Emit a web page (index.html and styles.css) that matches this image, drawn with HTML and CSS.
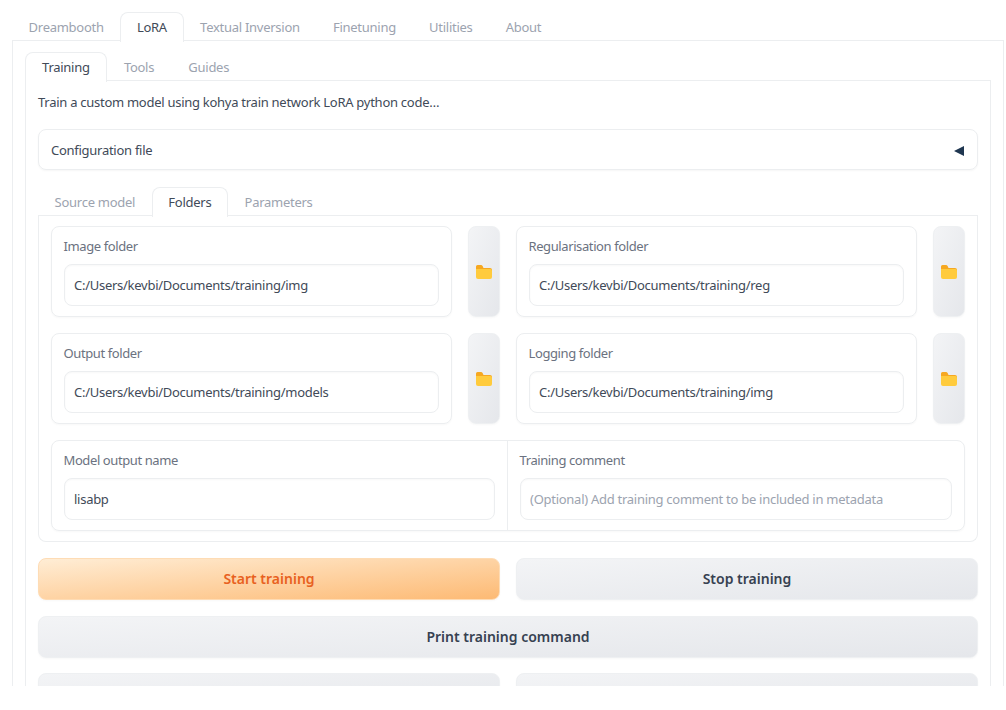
FILE: index.html
```html
<!DOCTYPE html>
<html>

<head>
    <title>Kohya LoRA Training</title>
    <link rel="stylesheet" href="styles.css">
</head>

<body>
    <div class="page">
        <nav class="tabs top-tabs">
            <a class="tab">Dreambooth</a>
            <a class="tab active">LoRA</a>
            <a class="tab">Textual Inversion</a>
            <a class="tab">Finetuning</a>
            <a class="tab">Utilities</a>
            <a class="tab">About</a>
        </nav>
        <div class="outer-panel">
            <nav class="tabs mode-tabs">
                <a class="tab active">Training</a>
                <a class="tab">Tools</a>
                <a class="tab">Guides</a>
            </nav>
            <div class="inner-panel">
                <p class="intro">Train a custom model using kohya train network LoRA python code…</p>

                <div class="accordion">
                    <span>Configuration file</span>
                    <span class="arrow"></span>
                </div>

                <nav class="tabs sub-tabs">
                    <a class="tab">Source model</a>
                    <a class="tab active">Folders</a>
                    <a class="tab">Parameters</a>
                </nav>
                <div class="folders-panel">
                    <div class="folder-row">
                        <label class="field">
                            <span class="field-label">Image folder</span>
                            <input class="text-input" value="C:/Users/kevbi/Documents/training/img">
                        </label>
                        <button class="btn folder-btn">
                            <svg viewBox="0 0 16 14" width="16" height="14"><path fill="#f6a821" d="M0 1.5Q0 0 1.5 0H5Q6 0 6.600 1L7.500 3H14Q16 3 16 5V8H0Z"/><path fill="#ffcb3d" d="M0 4H14.500Q16 4 16 5.500V12Q16 14 14 14H2Q0 14 0 12Z"/></svg>
                        </button>
                        <label class="field">
                            <span class="field-label">Regularisation folder</span>
                            <input class="text-input" value="C:/Users/kevbi/Documents/training/reg">
                        </label>
                        <button class="btn folder-btn">
                            <svg viewBox="0 0 16 14" width="16" height="14"><path fill="#f6a821" d="M0 1.5Q0 0 1.5 0H5Q6 0 6.600 1L7.500 3H14Q16 3 16 5V8H0Z"/><path fill="#ffcb3d" d="M0 4H14.500Q16 4 16 5.500V12Q16 14 14 14H2Q0 14 0 12Z"/></svg>
                        </button>
                    </div>
                    <div class="folder-row">
                        <label class="field">
                            <span class="field-label">Output folder</span>
                            <input class="text-input" value="C:/Users/kevbi/Documents/training/models">
                        </label>
                        <button class="btn folder-btn">
                            <svg viewBox="0 0 16 14" width="16" height="14"><path fill="#f6a821" d="M0 1.5Q0 0 1.5 0H5Q6 0 6.600 1L7.500 3H14Q16 3 16 5V8H0Z"/><path fill="#ffcb3d" d="M0 4H14.500Q16 4 16 5.500V12Q16 14 14 14H2Q0 14 0 12Z"/></svg>
                        </button>
                        <label class="field">
                            <span class="field-label">Logging folder</span>
                            <input class="text-input" value="C:/Users/kevbi/Documents/training/img">
                        </label>
                        <button class="btn folder-btn">
                            <svg viewBox="0 0 16 14" width="16" height="14"><path fill="#f6a821" d="M0 1.5Q0 0 1.5 0H5Q6 0 6.600 1L7.500 3H14Q16 3 16 5V8H0Z"/><path fill="#ffcb3d" d="M0 4H14.500Q16 4 16 5.500V12Q16 14 14 14H2Q0 14 0 12Z"/></svg>
                        </button>
                    </div>
                    <div class="name-row">
                        <label class="field">
                            <span class="field-label">Model output name</span>
                            <input class="text-input" value="lisabp">
                        </label>
                        <label class="field">
                            <span class="field-label">Training comment</span>
                            <input class="text-input" placeholder="(Optional) Add training comment to be included in metadata">
                        </label>
                    </div>
                </div>

                <div class="btn-row">
                    <button class="btn primary">Start training</button>
                    <button class="btn">Stop training</button>
                </div>
                <div class="btn-row">
                    <button class="btn">Print training command</button>
                </div>
                <div class="btn-row">
                    <button class="btn"></button>
                    <button class="btn"></button>
                </div>
            </div>
        </div>
    </div>
</body>

</html>
```

FILE: styles.css
```css
* {
    box-sizing: border-box;
}

body {
    margin: 0;
    background: white;
    font-family: "Noto Sans", sans-serif;
    font-size: 13px;
    letter-spacing: -0.27px;
    color: #414a58;
}

/* The screenshot stops at 686px, white below */
.page {
    height: 686px;
    overflow: hidden;
    padding: 12px 2px 0 12px;
}

/* Tabs */
.tabs {
    display: flex;
    height: 29px;
    border-bottom: 1px solid #eceef0;
}

.tab {
    height: 29px;
    padding: 0 15.6px;
    line-height: 28px;
    color: #9ca3af;
    border: 1px solid transparent;
    border-bottom: none;
    border-radius: 8px 8px 0 0;
}

.mode-tabs .tab {
    padding: 0 16.1px;
}

.tab.active {
    color: #414a58;
    background: white;
    border-color: #eceef0;
    height: 30px;
}

.outer-panel {
    height: 700px;
    padding: 11px 12px 0 12px;
    border: 1px solid #eceef0;
    border-top: none;
}

.inner-panel {
    height: 700px;
    padding: 0 12px;
    border: 1px solid #eceef0;
    border-top: none;
}

.intro {
    margin: 0;
    padding-top: 11px;
    height: 48px;
    line-height: 20px;
}

/* Configuration file accordion */
.accordion {
    display: flex;
    justify-content: space-between;
    align-items: center;
    height: 41px;
    padding: 0 13px 0 12px;
    border: 1px solid #eceef0;
    border-radius: 8px;
    box-shadow: 0 1px 2px rgba(0, 0, 0, 0.04);
}

.arrow {
    width: 0;
    height: 0;
    margin-top: 2px;
    border-top: 5.5px solid transparent;
    border-bottom: 5.5px solid transparent;
    border-right: 10px solid #1f3650;
}

.sub-tabs {
    margin-top: 17px;
}

.folders-panel {
    display: flex;
    flex-direction: column;
    gap: 16px;
    height: 326px;
    padding: 10px 12px;
    border: 1px solid #eceef0;
    border-top: none;
    border-radius: 0 0 8px 8px;
}

.folder-row {
    display: flex;
    height: 91px;
}

.folder-row .field {
    flex: 1;
    border: 1px solid #eceef0;
    border-radius: 8px;
    box-shadow: 0 1px 2px rgba(0, 0, 0, 0.03);
}

.field {
    display: block;
    padding: 9px 12px;
}

.field-label {
    display: block;
    height: 28px;
    margin-left: -0.5px;
    line-height: 20px;
    letter-spacing: -0.4px;
    color: #6b7280;
}

.text-input {
    display: block;
    width: 100%;
    height: 42px;
    padding: 0 9px;
    font: inherit;
    letter-spacing: inherit;
    color: #414a58;
    border: 1px solid #eceef0;
    border-radius: 8px;
    box-shadow: inset 0 1px 2px rgba(0, 0, 0, 0.03);
    outline: none;
}

.text-input::placeholder {
    color: #9ca3af;
}

/* Buttons */
.btn {
    flex: 1;
    height: 42px;
    padding: 0 0 1px;
    font: inherit;
    font-size: 14px;
    font-weight: 600;
    letter-spacing: 0;
    color: #374151;
    background: linear-gradient(to bottom right, #f3f4f6, #e5e7eb);
    border: 1px solid #eef0f2;
    border-radius: 8px;
    box-shadow: 0 1px 2px rgba(0, 0, 0, 0.03);
}

.btn.primary {
    color: #e8611f;
    background: linear-gradient(to bottom right, #ffedd5, #fdba74);
    border-color: #fedcb5;
}

.folder-btn {
    flex: none;
    display: flex;
    align-items: center;
    justify-content: center;
    width: 32px;
    height: 91px;
    margin: 0 16px;
    padding: 0;
}

.folder-btn:last-child {
    margin-right: 0;
}

.name-row {
    display: flex;
    height: 91px;
    border: 1px solid #eceef0;
    border-radius: 8px;
    box-shadow: 0 1px 2px rgba(0, 0, 0, 0.03);
}

.name-row .field {
    flex: 1;
}

.name-row .field:first-child {
    flex: none;
    width: 455px;
}

.name-row .field + .field {
    border-left: 1px solid #eceef0;
}

.btn-row {
    display: flex;
    gap: 16px;
    margin-top: 15.5px;
}

.folders-panel + .btn-row {
    margin-top: 16px;
}
```
